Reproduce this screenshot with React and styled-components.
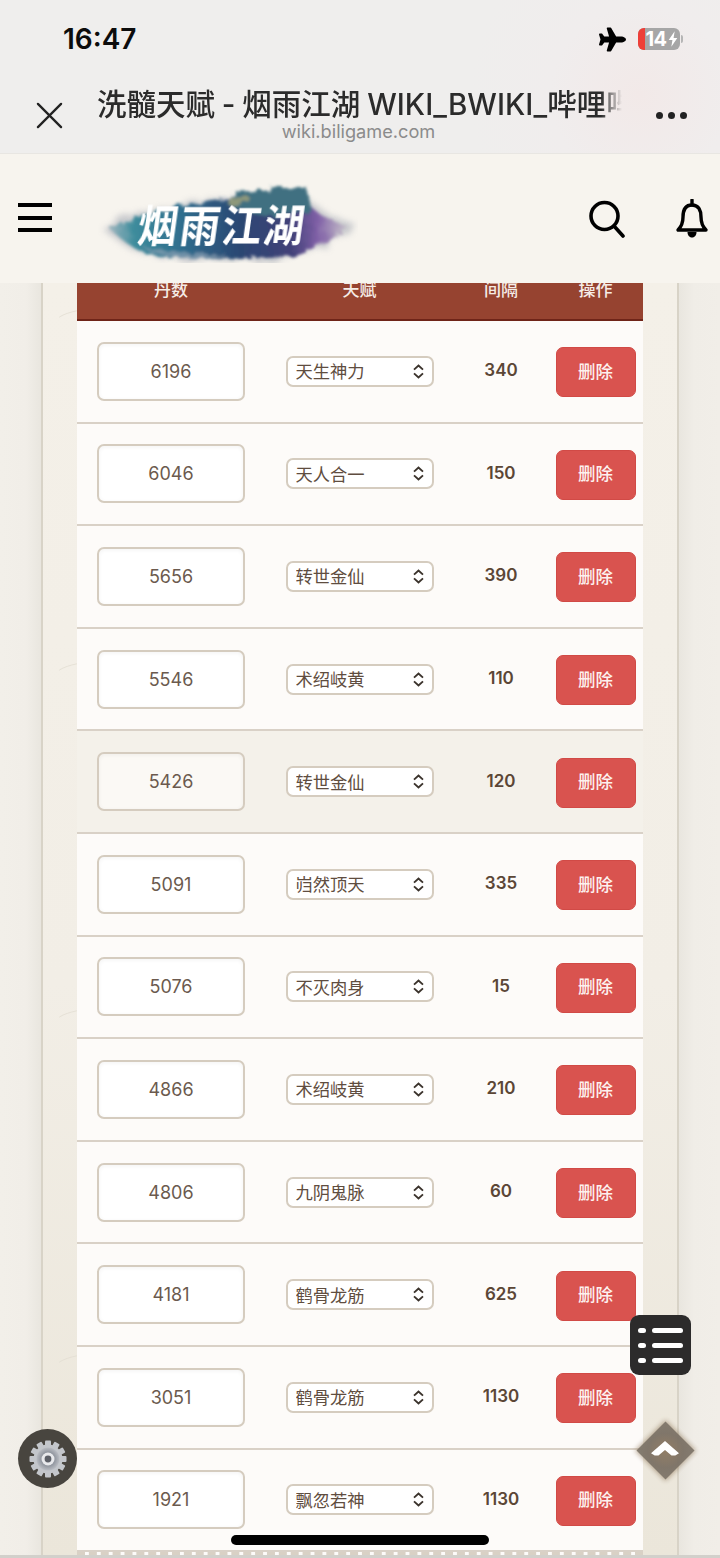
import React from "react";
import styled, { createGlobalStyle } from "styled-components";
import { FaPlane } from "react-icons/fa";

const FONT = `Inter, "Noto Sans CJK SC", "Noto Sans", sans-serif`;

const rows = [
  { dan: 6196, talent: "天生神力", gap: 340 },
  { dan: 6046, talent: "天人合一", gap: 150 },
  { dan: 5656, talent: "转世金仙", gap: 390 },
  { dan: 5546, talent: "术绍岐黄", gap: 110 },
  { dan: 5426, talent: "转世金仙", gap: 120, hovered: true },
  { dan: 5091, talent: "岿然顶天", gap: 335 },
  { dan: 5076, talent: "不灭肉身", gap: 15 },
  { dan: 4866, talent: "术绍岐黄", gap: 210 },
  { dan: 4806, talent: "九阴鬼脉", gap: 60 },
  { dan: 4181, talent: "鹤骨龙筋", gap: 625 },
  { dan: 3051, talent: "鹤骨龙筋", gap: 1130 },
  { dan: 1921, talent: "飘忽若神", gap: 1130 },
];

const streaks = [310, 663, 1010, 1355];

export default function App() {
  return (
    <Screen>
      <GlobalStyle />
      <TopBar>
        <StatusRow>
          <Clock>16:47</Clock>
          <StatusIcons>
            <FaPlane size={27} color="#000" />
            <Battery>
              <BatteryLow />
              <BatteryText>14</BatteryText>
              <svg width="10" height="16" viewBox="0 0 9 14">
                <path d="M6 0 0.6 8H4L3 14 8.4 6H5z" fill="#fff" />
              </svg>
              <BatteryCap />
            </Battery>
          </StatusIcons>
        </StatusRow>
        <TitleRow>
          <CloseIcon viewBox="0 0 28 28">
            <path d="M2 2 26 26M26 2 2 26" stroke="#222" strokeWidth="2.4" strokeLinecap="round" />
          </CloseIcon>
          <TitleBlock>
            <PageTitle>洗髓天赋 - 烟雨江湖 WIKI_BWIKI_哔哩哔哩</PageTitle>
            <PageHost>wiki.biligame.com</PageHost>
          </TitleBlock>
          <MoreDots>
            <i />
            <i />
            <i />
          </MoreDots>
        </TitleRow>
      </TopBar>

      <SiteHeader>
        <Burger>
          <i />
          <i />
          <i />
        </Burger>
        <Logo />
        <HeaderIcons>
          <svg width="38" height="38" viewBox="0 0 38 38" fill="none" stroke="#000" strokeWidth="3.6" strokeLinecap="round">
            <ellipse cx="16.5" cy="16" rx="13.5" ry="13.5" />
            <path d="M26 26 35 36" />
          </svg>
          <svg width="34" height="40" viewBox="0 0 34 40" fill="none" stroke="#000" strokeWidth="3.4" strokeLinejoin="round">
            <path d="M17 6C10 6 8 12 8 18C8 24 6 28 3 31H31C28 28 26 24 26 18C26 12 24 6 17 6Z" />
            <path d="M17 1V6" strokeLinecap="round" />
            <path d="M12.5 33H21.5C21.5 37 19 38.5 17 38.5C15 38.5 12.5 37 12.5 33Z" fill="#000" stroke="none" />
          </svg>
        </HeaderIcons>
      </SiteHeader>

      <Main>
        <Panel>
          {streaks.map((top) => (
            <Streak key={top} $top={top} viewBox="0 0 24 10">
              <path d="M1 9C7 5 14 3 23 1" stroke="#e2ddd2" strokeWidth="1" fill="none" />
            </Streak>
          ))}
          <Table>
            <HeadRow>
              <span>丹数</span>
              <span>天赋</span>
              <span>间隔</span>
              <span>操作</span>
            </HeadRow>
            {rows.map((row) => (
              <Row key={row.dan} $hovered={row.hovered}>
                <DanInput readOnly value={row.dan} $hovered={row.hovered} />
                <SelectWrap>
                  <TalentSelect defaultValue={row.talent}>
                    <option>{row.talent}</option>
                  </TalentSelect>
                  <Chevrons viewBox="0 0 13 15">
                    <path d="M2 5.6 6.5 1.6 11 5.6M2 9.4 6.5 13.4 11 9.4" fill="none" stroke="#3b332c" strokeWidth="1.9" />
                  </Chevrons>
                </SelectWrap>
                <GapValue>{row.gap}</GapValue>
                <DeleteButton>删除</DeleteButton>
              </Row>
            ))}
            <TableEnd />
          </Table>
        </Panel>
      </Main>

      <ListButton>
        {[0, 1, 2].map((i) => (
          <ListLine key={i}>
            <b />
            <i />
          </ListLine>
        ))}
      </ListButton>

      <BackToTop>
        <svg width="28" height="15" viewBox="0 0 30 16">
          <path d="M15 0 30 13 26 15.5H22L15 9.5 8 15.5H4L0 13Z" fill="#fff" />
        </svg>
      </BackToTop>

      <SettingsButton>
        <Gear />
      </SettingsButton>

      <HomeBar />
    </Screen>
  );
}

// brush-stroke site logo
function Logo() {
  return (
    <LogoWrap viewBox="0 0 260 84">
      <defs>
        <linearGradient id="ink" x1="0" x2="1" y1="0" y2="0">
          <stop offset="0" stopColor="#9fb6bf" />
          <stop offset="0.1" stopColor="#3d8c9c" />
          <stop offset="0.3" stopColor="#2f6d8d" />
          <stop offset="0.55" stopColor="#2b4672" />
          <stop offset="0.76" stopColor="#414178" />
          <stop offset="0.87" stopColor="#7f5fa6" />
          <stop offset="1" stopColor="#c9c4cb" />
        </linearGradient>
        <filter id="halo" x="-15%" y="-30%" width="130%" height="160%">
          <feTurbulence type="fractalNoise" baseFrequency="0.07" numOctaves="3" seed="11" />
          <feDisplacementMap in="SourceGraphic" scale="12" />
          <feGaussianBlur stdDeviation="3" />
        </filter>
        <filter id="rough" x="-10%" y="-20%" width="120%" height="140%">
          <feTurbulence type="fractalNoise" baseFrequency="0.12" numOctaves="3" seed="4" />
          <feDisplacementMap in="SourceGraphic" scale="8" />
          <feGaussianBlur stdDeviation="1.6" />
        </filter>
        <filter id="brush" x="-5%" y="-5%" width="110%" height="110%">
          <feTurbulence type="fractalNoise" baseFrequency="0.3" numOctaves="2" seed="8" />
          <feDisplacementMap in="SourceGraphic" scale="1.5" />
          <feGaussianBlur stdDeviation="0.3" />
        </filter>
      </defs>
      <g transform="translate(0 4)">
        <path
          filter="url(#halo)"
          d="M4 46C24 34 44 28 68 24L136 14 200 10 228 30 258 42 226 62 170 78 90 78 36 68Z"
          fill="#b9bcc2"
          opacity="0.75"
        />
        <g filter="url(#rough)">
          <path
            d="M12 46C28 38 44 32 64 28C86 20 112 20 136 14L196 10C206 16 214 26 226 34C238 40 246 41 250 44C240 52 230 60 212 66C196 74 178 76 160 74C132 78 112 76 90 74C68 76 50 72 38 66C28 60 18 52 12 46Z"
            fill="url(#ink)"
          />
          <path d="M128 22 138 8H166L176 4 208 4 214 28 170 34Z" fill="#3f7081" />
          <path d="M130 16 150 12 152 19 132 23Z" fill="#a9a578" opacity="0.75" />
          <path d="M44 64C70 70 100 70 130 72L110 76C84 76 60 74 44 64Z" fill="#8aa0b2" opacity="0.7" />
        </g>
      </g>
      <LogoText transform="translate(38 63) skewX(-8) scale(1 1.1)" textLength="166" filter="url(#brush)">
        烟雨江湖
      </LogoText>
    </LogoWrap>
  );
}

// settings cog with a metallic hub
function Gear() {
  const teeth = Array.from({ length: 12 }, (_, i) => i * 30);
  return (
    <svg width="40" height="40" viewBox="0 0 40 40">
      <defs>
        <radialGradient id="hub">
          <stop offset="0" stopColor="#e4e6ea" />
          <stop offset="0.55" stopColor="#8e939c" />
          <stop offset="1" stopColor="#b9bcc2" />
        </radialGradient>
      </defs>
      {teeth.map((deg) => (
        <rect key={deg} x="17" y="1.5" width="6" height="7" rx="1" fill="#c3c6cb" transform={`rotate(${deg} 20 20)`} />
      ))}
      <circle cx="20" cy="20" r="14.5" fill="#c3c6cb" />
      <circle cx="20" cy="20" r="11.5" fill="url(#hub)" />
      <circle cx="20" cy="20" r="6.5" fill="#e8e9ec" />
      <circle cx="20" cy="20" r="3.4" fill="#5d6068" />
    </svg>
  );
}

const GlobalStyle = createGlobalStyle`
  html, body {
    margin: 0;
    padding: 0;
    background: #f1eee8;
  }
  * {
    box-sizing: border-box;
  }
`;

const Screen = styled.div`
  position: relative;
  display: flex;
  flex-direction: column;
  width: 720px;
  height: 1558px;
  overflow: hidden;
  font-family: ${FONT};
`;

const TopBar = styled.div`
  height: 154px;
  flex: none;
  background: radial-gradient(circle at 640px 95px, #f2e9e8 0, #f0eded 90px, #efeeed 170px);
  border-bottom: 1px solid #e8e6e2;
`;

const StatusRow = styled.div`
  display: flex;
  align-items: center;
  justify-content: space-between;
  height: 78px;
  padding: 0 40px 0 63px;
`;

const Clock = styled.div`
  font-size: 28px;
  font-weight: 600;
  color: #0c0c0c;
`;

const StatusIcons = styled.div`
  display: flex;
  align-items: center;
  gap: 12px;
`;

const Battery = styled.div`
  position: relative;
  display: flex;
  align-items: center;
  justify-content: center;
  gap: 1px;
  width: 42px;
  height: 22px;
  padding-left: 5px;
  border-radius: 6px;
  background: #a6a6a6;
`;

const BatteryLow = styled.div`
  position: absolute;
  left: 0;
  top: 0;
  bottom: 0;
  width: 7px;
  border-radius: 6px 0 0 6px;
  background: #ee3f38;
`;

const BatteryText = styled.span`
  position: relative;
  font-size: 20px;
  font-weight: 700;
  letter-spacing: -0.5px;
  color: #fff;
`;

const BatteryCap = styled.div`
  position: absolute;
  right: -3px;
  top: 7px;
  width: 2px;
  height: 8px;
  border-radius: 0 2px 2px 0;
  background: #b5b5b5;
`;

const TitleRow = styled.div`
  display: flex;
  align-items: flex-start;
  height: 75px;
  padding: 9px 0 0 36px;
`;

const CloseIcon = styled.svg`
  flex: none;
  width: 27px;
  height: 27px;
  margin: 15px 34px 0 0;
`;

const TitleBlock = styled.div`
  display: flex;
  flex-direction: column;
  align-items: center;
  width: 525px;
`;

const PageTitle = styled.div`
  width: 100%;
  height: 34px;
  line-height: 34px;
  overflow: hidden;
  white-space: nowrap;
  font-size: 29.5px;
  font-weight: 500;
  word-spacing: -1px;
  color: #2b2b2b;
  -webkit-mask-image: linear-gradient(to right, #000 96%, transparent 100%);
  mask-image: linear-gradient(to right, #000 96%, transparent 100%);
`;

const PageHost = styled.div`
  height: 20px;
  margin-right: 2px;
  line-height: 20px;
  font-size: 18.2px;
  color: #8b8b8b;
`;

const MoreDots = styled.div`
  display: flex;
  gap: 5px;
  margin: 25px 0 0 34px;

  i {
    width: 7px;
    height: 7px;
    border-radius: 50%;
    background: #222;
  }
`;

const SiteHeader = styled.header`
  display: flex;
  align-items: center;
  height: 129px;
  flex: none;
  padding: 0 11px 0 18px;
  background: #f7f4ee;
`;

const Burger = styled.div`
  display: flex;
  flex-direction: column;
  gap: 8.5px;
  width: 34px;
  margin: -2px 46px 0 0;

  i {
    height: 4px;
    background: #000;
  }
`;

const LogoWrap = styled.svg`
  width: 260px;
  height: 84px;
  margin-top: 4px;
`;

const LogoText = styled.text`
  font-family: "Noto Sans CJK SC", sans-serif;
  font-size: 40px;
  font-weight: 700;
  fill: #fff;
`;

const HeaderIcons = styled.div`
  display: flex;
  align-items: center;
  gap: 49px;
  margin: 1px 0 0 auto;
`;

const Main = styled.main`
  position: relative;
  flex: 1;
  overflow: hidden;
  padding: 0 41px;
  background: linear-gradient(to right, #f2efe9 0, #f1eee8 26px, #e9e6df 41px, #e9e6df 679px, #f0ede7 694px, #f1eee8 100%);
  border-bottom: 3px solid #d2d0cb;
`;

const Panel = styled.div`
  position: relative;
  display: flow-root;
  height: 100%;
  padding: 0 34px;
  border-left: 2px solid #d8d3c7;
  border-right: 2px solid #d8d3c7;
  background: linear-gradient(to bottom, #f4f0e8 0, #f2eee6 55%, #ebe6da 100%);
`;

const Streak = styled.svg`
  position: absolute;
  left: 15px;
  top: ${(p) => p.$top - 283}px;
  width: 20px;
  height: 8px;
`;

const Table = styled.div`
  position: relative;
  margin-top: -26px;
  width: 566px;
`;

const columns = "188px 189px 94px 95px";

const HeadRow = styled.div`
  display: grid;
  grid-template-columns: ${columns};
  align-items: center;
  justify-items: center;
  height: 64px;
  background: #964330;
  border-bottom: 2px solid #6f2418;
  font-size: 17px;
  font-weight: 500;
  color: #f5ece6;
`;

const Row = styled.div`
  display: grid;
  grid-template-columns: ${columns};
  align-items: center;
  justify-items: center;
  height: 102.6px;
  background: ${(p) => (p.$hovered ? "#f4f1ea" : "#fdfbf9")};
  border-bottom: 2px solid #d9d1c7;
`;

const DanInput = styled.input`
  width: 148px;
  height: 59px;
  text-align: center;
  font-family: ${FONT};
  font-size: 18px;
  color: #6b5a4e;
  background: ${(p) => (p.$hovered ? "#fbf9f5" : "#fff")};
  border: 2px solid #d5ccbf;
  border-radius: 7px;
  outline: none;
  box-shadow: inset 0 1px 4px rgba(0, 0, 0, 0.05);
`;

const SelectWrap = styled.div`
  position: relative;
  width: 148px;
  height: 31px;
`;

const TalentSelect = styled.select`
  appearance: none;
  width: 100%;
  height: 100%;
  padding: 1px 0 0 8px;
  font-family: ${FONT};
  font-size: 17.3px;
  color: #5f4d40;
  background: #fff;
  border: 2px solid #d5ccbf;
  border-radius: 7px;
  outline: none;
`;

const Chevrons = styled.svg`
  position: absolute;
  right: 9px;
  top: 8px;
  width: 13px;
  height: 15px;
`;

const GapValue = styled.div`
  padding-bottom: 2px;
  font-size: 17px;
  font-weight: 600;
  color: #5b4636;
`;

const DeleteButton = styled.button`
  width: 80px;
  height: 50px;
  margin-top: 2px;
  padding: 0 0 4px;
  font-family: ${FONT};
  font-size: 17.5px;
  font-weight: 500;
  color: #fdf1ef;
  background: #d9534f;
  border: 1px solid #d14a46;
  border-radius: 7px;
`;

const TableEnd = styled.div`
  height: 4px;
  border-bottom: 4px dashed #d9d1c5;
  background: #fdfbf9;
`;

const ListButton = styled.div`
  position: absolute;
  left: 630px;
  top: 1315px;
  display: flex;
  flex-direction: column;
  justify-content: center;
  gap: 10px;
  width: 61px;
  height: 60px;
  padding: 0 8px;
  border-radius: 9px;
  background: #2c2b2b;
`;

const ListLine = styled.div`
  display: flex;
  gap: 6px;
  height: 5px;

  b {
    width: 8px;
    border-radius: 3px;
    background: #fff;
  }

  i {
    flex: 1;
    border-radius: 3px;
    background: #fff;
  }
`;

const BackToTop = styled.div`
  position: absolute;
  left: 636px;
  top: 1421px;
  display: flex;
  align-items: center;
  justify-content: center;
  width: 58px;
  height: 58px;
  padding-bottom: 3px;

  &::before {
    content: "";
    position: absolute;
    inset: 8.5px;
    transform: rotate(45deg);
    background: radial-gradient(circle, #8f7a62 0, #7c7266 60%, #80776b 100%);
    box-shadow: 0 0 5px 1px rgba(150, 128, 100, 0.7);
    opacity: 0.96;
  }

  svg {
    position: relative;
  }
`;

const SettingsButton = styled.div`
  position: absolute;
  left: 18px;
  top: 1429px;
  display: flex;
  align-items: center;
  justify-content: center;
  width: 59px;
  height: 59px;
  border-radius: 50%;
  background: #48453f;
`;

const HomeBar = styled.div`
  position: absolute;
  left: 231px;
  top: 1535px;
  width: 258px;
  height: 10px;
  border-radius: 5px;
  background: #000;
`;
